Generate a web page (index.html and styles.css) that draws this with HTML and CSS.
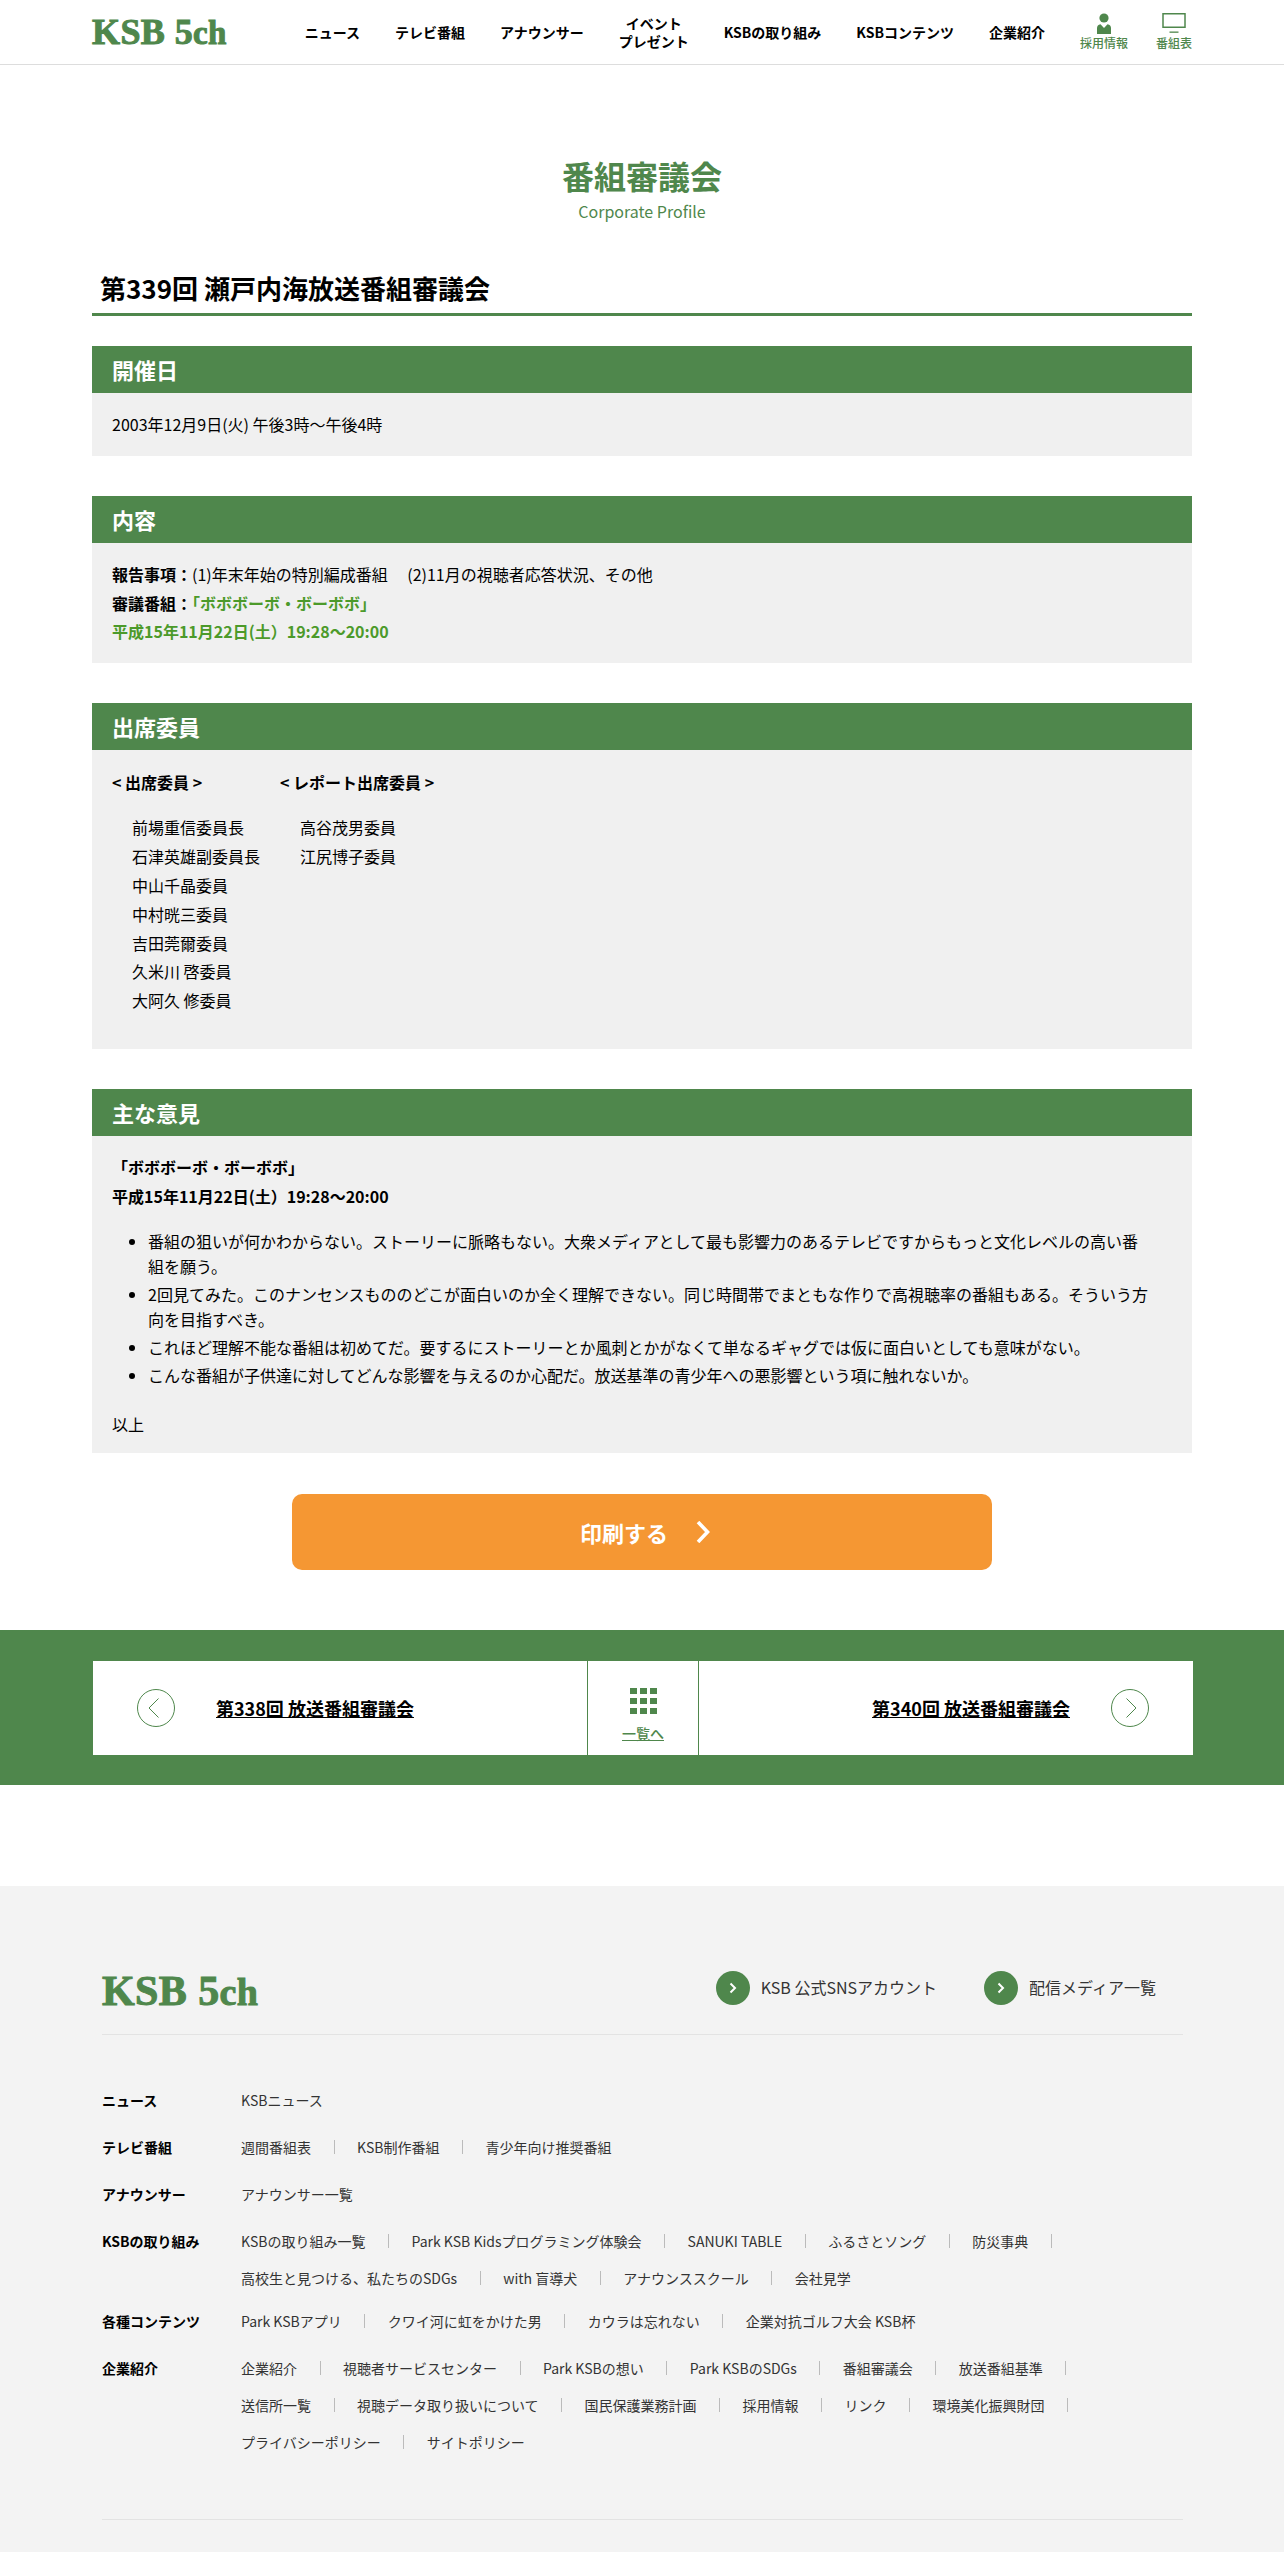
FILE: index.html
```html
<!DOCTYPE html>
<html lang="ja">
<head>
<meta charset="utf-8">
<title>番組審議会</title>
<link rel="stylesheet" href="styles.css">
</head>
<body>
<header class="site-header">
  <div class="header-inner">
    <a class="logo"><span>KSB 5</span><span class="logo-ch">ch</span></a>
    <ul class="gnav">
      <li>ニュース</li>
      <li>テレビ番組</li>
      <li>アナウンサー</li>
      <li class="gnav-two">イベント<br>プレゼント</li>
      <li>KSBの取り組み</li>
      <li>KSBコンテンツ</li>
      <li>企業紹介</li>
    </ul>
    <div class="util">
      <a class="util-item">
        <svg width="16" height="22" viewBox="0 0 16 22"><circle cx="8" cy="5" r="4.6" fill="#4f874c"/><path d="M1 21v-6q0-3 3.5-3.8L8 15l3.5-3.800q3.500.8 3.500 3.800v6z" fill="#4f874c"/></svg>
        <span>採用情報</span>
      </a>
      <a class="util-item">
        <svg width="26" height="22" viewBox="0 0 26 22"><rect x="2" y=".75" width="22" height="13.500" fill="none" stroke="#4f874c" stroke-width="1.500"/><rect x="8.500" y="18.500" width="9" height="1.300" fill="#4f874c"/></svg>
        <span>番組表</span>
      </a>
    </div>
  </div>
</header>

<main class="main">
  <div class="page-title">
    <h1>番組審議会</h1>
    <p>Corporate Profile</p>
  </div>
  <h2 class="report-title">第339回 瀬戸内海放送番組審議会</h2>

  <section class="box">
    <h3>開催日</h3>
    <div class="box-body"><p>2003年12月9日(火) 午後3時～午後4時</p></div>
  </section>

  <section class="box">
    <h3>内容</h3>
    <div class="box-body">
      <p><b>報告事項：</b>(1)年末年始の特別編成番組　 (2)11月の視聴者応答状況、その他</p>
      <p><b>審議番組：</b><b class="hl">「ボボボーボ・ボーボボ」</b></p>
      <p><b class="hl">平成15年11月22日(土）19:28～20:00</b></p>
    </div>
  </section>

  <section class="box">
    <h3>出席委員</h3>
    <div class="box-body members">
      <div class="member-col">
        <b>&lt; 出席委員 &gt;</b>
        <ul>
          <li>前場重信委員長</li>
          <li>石津英雄副委員長</li>
          <li>中山千晶委員</li>
          <li>中村晄三委員</li>
          <li>吉田莞爾委員</li>
          <li>久米川 啓委員</li>
          <li>大阿久 修委員</li>
        </ul>
      </div>
      <div class="member-col">
        <b>&lt; レポート出席委員 &gt;</b>
        <ul>
          <li>高谷茂男委員</li>
          <li>江尻博子委員</li>
        </ul>
      </div>
    </div>
  </section>

  <section class="box">
    <h3>主な意見</h3>
    <div class="box-body opinions-body">
      <p><b>「ボボボーボ・ボーボボ」</b></p>
      <p><b>平成15年11月22日(土）19:28～20:00</b></p>
      <ul class="opinions">
        <li>番組の狙いが何かわからない。ストーリーに脈略もない。大衆メディアとして最も影響力のあるテレビですからもっと文化レベルの高い番組を願う。</li>
        <li>2回見てみた。このナンセンスもののどこが面白いのか全く理解できない。同じ時間帯でまともな作りで高視聴率の番組もある。そういう方向を目指すべき。</li>
        <li>これほど理解不能な番組は初めてだ。要するにストーリーとか風刺とかがなくて単なるギャグでは仮に面白いとしても意味がない。</li>
        <li>こんな番組が子供達に対してどんな影響を与えるのか心配だ。放送基準の青少年への悪影響という項に触れないか。</li>
      </ul>
      <p class="end">以上</p>
    </div>
  </section>

  <a class="print-btn">
    <span>印刷する</span>
    <svg width="14" height="22" viewBox="0 0 14 22"><path d="M2 1 11.500 11 2 21" fill="none" stroke="#fff" stroke-width="3.600"/></svg>
  </a>
</main>

<nav class="pager-band">
  <div class="pager">
    <a class="pager-side">
      <svg class="pager-circle" width="38" height="38" viewBox="0 0 38 38"><circle cx="19" cy="19" r="18.500" fill="#fff" stroke="#4f874c"/><path d="M21.500 9.500 12 19l9.500 9.500" fill="none" stroke="#4f874c"/></svg>
      <span>第338回 放送番組審議会</span>
    </a>
    <a class="pager-list">
      <span class="dots"><i></i><i></i><i></i><i></i><i></i><i></i><i></i><i></i><i></i></span>
      <span class="pager-list-label">一覧へ</span>
    </a>
    <a class="pager-side pager-next">
      <span>第340回 放送番組審議会</span>
      <svg class="pager-circle" width="38" height="38" viewBox="0 0 38 38"><circle cx="19" cy="19" r="18.500" fill="#fff" stroke="#4f874c"/><path d="M15.500 9.500 25 19l-9.500 9.500" fill="none" stroke="#4f874c"/></svg>
    </a>
  </div>
</nav>

<footer class="site-footer">
  <div class="footer-head">
    <a class="logo logo-footer"><span>KSB 5</span><span class="logo-ch">ch</span></a>
    <div class="footer-links">
      <a><i class="round"><svg width="10" height="14" viewBox="0 0 10 14"><path d="M2.500 2.500 7 7l-4.500 4.500" fill="none" stroke="#fff" stroke-width="2"/></svg></i>KSB 公式SNSアカウント</a>
      <a><i class="round"><svg width="10" height="14" viewBox="0 0 10 14"><path d="M2.500 2.500 7 7l-4.500 4.500" fill="none" stroke="#fff" stroke-width="2"/></svg></i>配信メディア一覧</a>
    </div>
  </div>
  <div class="sitemap">
    <div class="sm-row"><b>ニュース</b><ul><li>KSBニュース</li></ul></div>
    <div class="sm-row"><b>テレビ番組</b><ul><li>週間番組表</li><li>KSB制作番組</li><li>青少年向け推奨番組</li></ul></div>
    <div class="sm-row"><b>アナウンサー</b><ul><li>アナウンサー一覧</li></ul></div>
    <div class="sm-row sm-tight"><b>KSBの取り組み</b><ul><li>KSBの取り組み一覧</li><li>Park KSB Kidsプログラミング体験会</li><li>SANUKI TABLE</li><li>ふるさとソング</li><li>防災事典</li><li>高校生と見つける、私たちのSDGs</li><li>with 盲導犬</li><li>アナウンススクール</li><li>会社見学</li></ul></div>
    <div class="sm-row"><b>各種コンテンツ</b><ul><li>Park KSBアプリ</li><li>クワイ河に虹をかけた男</li><li>カウラは忘れない</li><li>企業対抗ゴルフ大会 KSB杯</li></ul></div>
    <div class="sm-row"><b>企業紹介</b><ul><li>企業紹介</li><li>視聴者サービスセンター</li><li>Park KSBの想い</li><li>Park KSBのSDGs</li><li>番組審議会</li><li>放送番組基準</li><li>送信所一覧</li><li>視聴データ取り扱いについて</li><li>国民保護業務計画</li><li>採用情報</li><li>リンク</li><li>環境美化振興財団</li><li>プライバシーポリシー</li><li>サイトポリシー</li></ul></div>
  </div>
  <div class="footer-rule"></div>
</footer>
</body>
</html>
```
FILE: styles.css
```css
* { box-sizing: border-box; }
html, body { margin: 0; padding: 0; }
body {
  font-family: "Noto Sans CJK JP", "Noto Sans", sans-serif;
  font-size: 16px;
  line-height: 28.8px;
  color: #000;
  background: #fff;
  height: 2552px;
  overflow: hidden;
}
ul { list-style: none; margin: 0; padding: 0; }
h1, h2, h3, p { margin: 0; }

.site-header { height: 65px; border-bottom: 1px solid #ddd; }
.header-inner { width: 1100px; margin: 0 auto; height: 64px; display: flex; align-items: center; }
.logo {
  font-family: "Liberation Serif", serif;
  font-weight: 700;
  font-size: 36px;
  line-height: 1;
  letter-spacing: 0.4px;
  color: #4f874c;
  white-space: nowrap;
  display: flex;
  align-items: baseline;
  -webkit-text-stroke: 1px #4f874c;
}
.logo-ch { font-size: 33px; }
.gnav {
  margin-left: auto;
  display: flex;
  align-items: center;
  gap: 35px;
  font-size: 14px;
  font-weight: 700;
  line-height: 18px;
  text-align: center;
  white-space: nowrap;
}
.util { display: flex; gap: 28px; margin-left: 35px; padding-bottom: 1px; }
.util-item { display: flex; flex-direction: column; align-items: center; font-size: 12px; line-height: 16px; font-weight: 500; color: #4f874c; }
.util-item svg { display: block; }

.main { width: 1100px; margin: 0 auto; padding-top: 87px; }
.page-title { text-align: center; color: #4f874c; }
.page-title h1 { font-size: 32px; line-height: 46px; font-weight: 700; }
.page-title p { font-size: 16px; line-height: 22px; font-weight: 400; margin-top: 2px; }
.report-title {
  margin-top: 48px;
  padding: 0 8px 7px;
  font-size: 26px;
  line-height: 36px;
  font-weight: 700;
  border-bottom: 3px solid #4f874c;
}

.box { margin-top: 40px; }
.report-title + .box { margin-top: 30px; }
.box h3 {
  height: 47px;
  padding: 0 20px;
  background: #4f874c;
  color: #fff;
  font-size: 22px;
  line-height: 47px;
  font-weight: 700;
}
.box-body { background: #f0f0f0; padding: 17px 20px; }
.hl { color: #4c9a2a; }

.members { display: flex; gap: 20px; padding: 18px 20px 33.9px; }
.member-col > b { display: block; }
.member-col ul { margin-top: 16.5px; padding-left: 20px; }

.opinions-body { padding-bottom: 14.6px; }
.opinions { list-style: disc; margin: 18px 0 0; padding: 0 22px 0 36px; line-height: 25px; }
.opinions li + li { margin-top: 3px; }
.end { margin-top: 22px; }

.print-btn {
  display: flex;
  align-items: center;
  justify-content: center;
  gap: 28px;
  width: 700px;
  height: 76px;
  margin: 41px auto 0;
  padding-left: 6px;
  border-radius: 10px;
  background: #f59733;
  color: #fff;
  font-size: 22px;
  font-weight: 700;
}

.pager-band { margin-top: 60px; background: #4f874c; padding: 31px 91px 30px 93px; }
.pager { display: flex; height: 94px; background: #fff; }
.pager-side {
  flex: 1;
  display: flex;
  align-items: center;
  gap: 41px;
  padding: 0 44px;
  font-size: 18px;
  font-weight: 700;
  text-decoration: underline;
}
.pager-next { justify-content: flex-end; }
.pager-circle { flex: none; }
.pager-list {
  width: 112px;
  flex: none;
  border-left: 1px solid #4f874c;
  border-right: 1px solid #4f874c;
  display: flex;
  flex-direction: column;
  align-items: center;
  padding-top: 27px;
  color: #4f874c;
}
.dots { display: grid; grid-template-columns: repeat(3, 7px); column-gap: 3px; row-gap: 4px; }
.dots i { display: block; width: 7px; height: 6px; background: #4f874c; }
.pager-list-label { margin-top: 9px; font-size: 14px; line-height: 20px; font-weight: 500; text-decoration: underline; }

.site-footer { margin-top: 100.6px; background: #f3f3f3; padding: 0 101px 0 102px; height: 666px; }
.footer-head { height: 149px; padding-top: 85px; display: flex; justify-content: space-between; border-bottom: 1px solid #e3e3e3; }
.logo-footer { font-size: 42px; align-self: flex-start; margin-top: -1px; }
.logo-footer .logo-ch { font-size: 38px; }
.footer-links { display: flex; gap: 47px; padding-right: 27px; height: 34px; color: #333; }
.footer-links a { display: flex; align-items: center; gap: 11px; white-space: nowrap; }
.round { width: 34px; height: 34px; border-radius: 50%; background: #4f874c; display: flex; align-items: center; justify-content: center; }

.sitemap { padding-top: 47px; font-size: 14px; line-height: 37px; }
.sm-row { display: flex; margin-bottom: 10px; }
.sm-tight { margin-bottom: 6px; }
.sm-row > b { width: 139px; flex: none; }
.sm-row ul { display: flex; flex-wrap: wrap; color: #333; }
.sm-row li { display: flex; align-items: center; white-space: nowrap; }
.sm-row li:not(:last-child)::after { content: ""; width: 1px; height: 14px; background: #bbb; margin: 0 22.5px; }
.footer-rule { margin-top: 58px; border-top: 1px solid #e3e3e3; }
```
